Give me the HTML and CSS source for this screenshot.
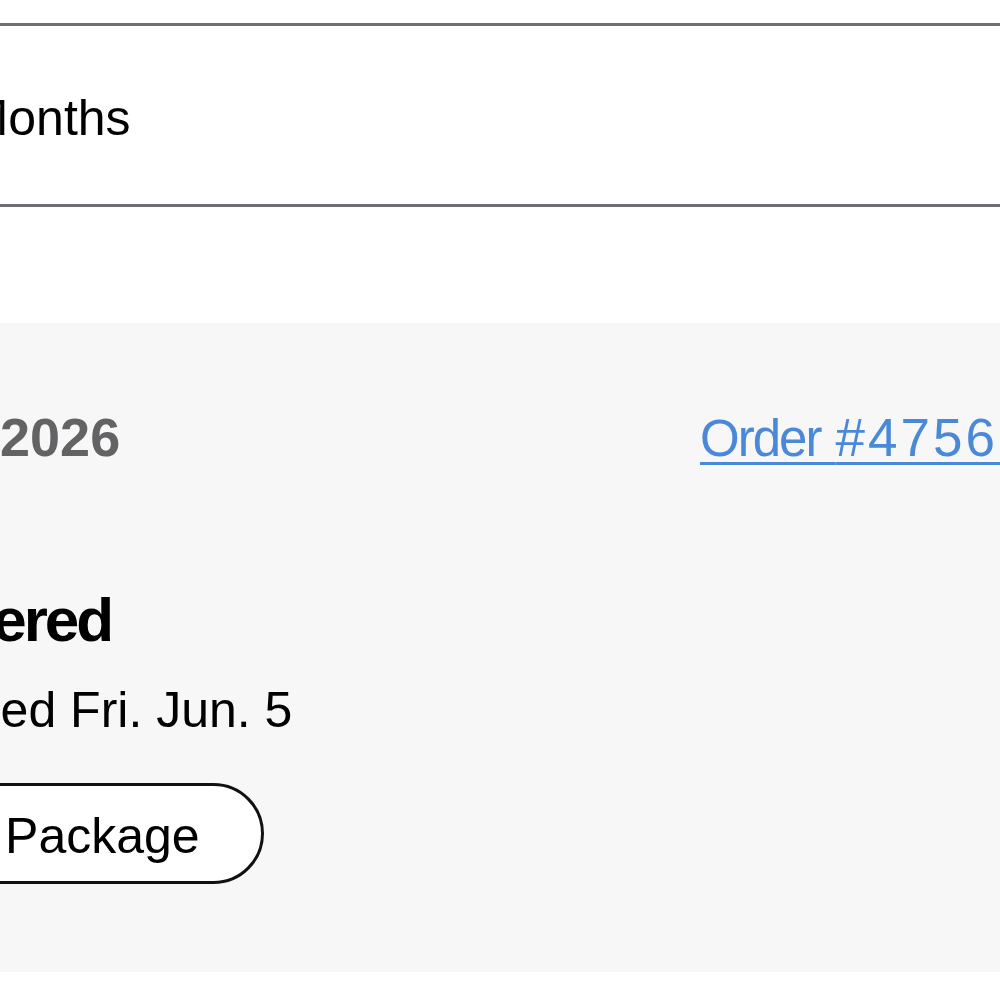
FILE: index.html
```html
<!DOCTYPE html>
<html lang="en">
<head>
<meta charset="utf-8">
<title>Orders</title>
<link rel="stylesheet" href="styles.css">
</head>
<body>
<div class="page">
  <div class="filter">
    <span class="filter-text">Past 3 Months</span>
  </div>
  <section class="order">
    <div class="order-head">
      <span class="order-date">Jun 3, 2026</span>
      <a class="order-link" href="#">Order <span class="order-num">#47561234</span></a>
    </div>
    <h2 class="status">Delivered</h2>
    <p class="status-sub">Delivered Fri. Jun. 5</p>
    <button class="btn">Track Package</button>
  </section>
</div>
</body>
</html>
```
FILE: styles.css
```css
html, body {
  margin: 0;
  padding: 0;
  background: #ffffff;
  overflow: hidden;
}
body {
  font-family: "Liberation Sans", Arial, sans-serif;
  color: #000;
}
.page {
  margin-left: -155px;
  width: 1400px;
  padding-top: 23px;
}
.filter {
  border-top: 3px solid #6e6e73;
  border-bottom: 3px solid #6e6e73;
  padding: 62px 0 56px;
  font-size: 50px;
  line-height: 60px;
}
.filter-text {
  display: block;
  margin-left: -34px;
}
.order {
  margin-top: 116px;
  background: #f7f7f7;
  padding: 84px 0 88px;
}
.order-head {
  display: grid;
  grid-template-columns: 855px 1fr;
  align-items: baseline;
  line-height: 60px;
}
.order-date {
  font-size: 54px;
  font-weight: 700;
  color: #636366;
  margin-left: -16px;
  white-space: nowrap;
}
.order-link {
  justify-self: start;
  font-size: 51px;
  color: #4a88d8;
  text-decoration: underline;
  text-decoration-thickness: 3px;
  text-underline-offset: 6px;
  white-space: nowrap;
  letter-spacing: -2px;
  word-spacing: 3px;
}
.order-num {
  font-size: 53px;
  letter-spacing: 3px;
}
.status {
  margin: 113px 0 0 14px;
  font-size: 62px;
  line-height: 76px;
  font-weight: 700;
  letter-spacing: -3px;
}
.status-sub {
  margin: 22px 0 0;
  font-size: 50px;
  line-height: 60px;
}
.btn {
  display: block;
  margin: 43px 0 0 -38px;
  padding: 20px 61px 15px 58px;
  border: 3px solid #111;
  border-radius: 60px;
  background: #fff;
  font-family: inherit;
  font-size: 50px;
  line-height: 60px;
  color: #000;
}
```
